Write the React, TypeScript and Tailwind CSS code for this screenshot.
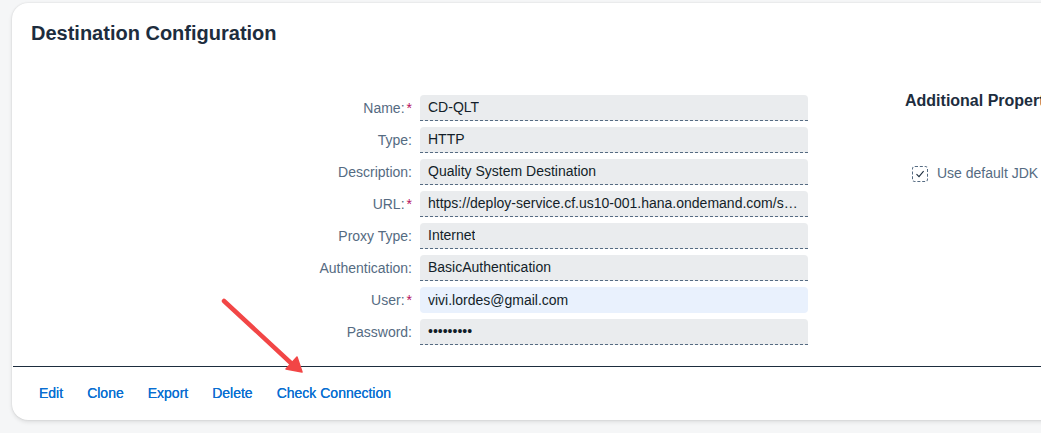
import React from "react";

const rows: { label: string; value: string; required?: boolean; focus?: boolean }[] = [
  { label: "Name:", value: "CD-QLT", required: true },
  { label: "Type:", value: "HTTP" },
  { label: "Description:", value: "Quality System Destination" },
  { label: "URL:", value: "https://deploy-service.cf.us10-001.hana.ondemand.com/slprot/hana-cloud-qa-whatever", required: true },
  { label: "Proxy Type:", value: "Internet" },
  { label: "Authentication:", value: "BasicAuthentication" },
  { label: "User:", value: "vivi.lordes@gmail.com", required: true, focus: true },
  { label: "Password:", value: "•••••••••" },
];

export default function App() {
  return (
    <div
      className="relative w-[1041px] h-[433px] overflow-hidden bg-[#f5f6f7] pl-[12px] pt-[3px]"
      style={{ fontFamily: '"Liberation Sans", Arial, sans-serif' }}
    >
      <div className="w-[1100px] h-[417px] bg-white rounded-[16px] shadow-[0_0_2px_rgba(0,0,0,0.12),0_2px_4px_rgba(0,0,0,0.1)] flex flex-col">
        <div className="pl-[19px] pt-[18px]">
          <div className="h-[24px] text-[20px] leading-[24px] font-bold text-[#1d2d3e]">Destination Configuration</div>
        </div>
        <div className="flex mt-[50px] h-[250px]">
          <div className="w-[408px] flex flex-col gap-[6px]">
            {rows.map((r) => (
              <div key={r.label} className="h-[26px] flex items-center">
                <div className="w-[400px] text-right text-[14px] text-[#556b82]">
                  {r.label}
                  {r.required ? <span className="text-[#b5105e] ml-[2px]">*</span> : null}
                </div>
              </div>
            ))}
          </div>
          <div className="w-[388px] flex flex-col gap-[6px]">
            {rows.map((r) => (
              <div
                key={r.label}
                className={
                  r.focus
                    ? "h-[26px] rounded-[4px] bg-[#e9f1fd] flex items-center px-[8px] text-[14px] text-[#131e29]"
                    : "h-[26px] rounded-t-[4px] bg-[#eaecee] border-b border-dashed border-[#556b82] flex items-center px-[8px] text-[14px] text-[#131e29]"
                }
              >
                <span className="truncate">{r.value}</span>
              </div>
            ))}
          </div>
          <div className="ml-[97px] flex flex-col">
            <div className="h-[14px] mt-[-1px] text-[16px] leading-[14px] font-bold text-[#1d2d3e] whitespace-nowrap">
              Additional Properties
            </div>
            <div className="mt-[55px] ml-[7px] flex items-center gap-[9px] whitespace-nowrap">
              <div className="w-[16px] h-[16px] rounded-[3px] border border-dashed border-[#556b82] flex items-center justify-center">
                <svg width="10" height="10" viewBox="0 0 10 10">
                  <path d="M1.5 5.2 L4 7.6 L8.6 2.2" fill="none" stroke="#1d2d3e" strokeWidth="1.1" />
                </svg>
              </div>
              <span className="text-[14px] text-[#556b82]">Use default JDK truststore</span>
            </div>
          </div>
        </div>
        <div className="mt-[21px] ml-[1px] border-t border-[#1d2d3e]" />
        <div className="h-[53px] flex items-center pl-[27px] gap-[24px] text-[14px] text-[#0a6ed1] font-normal [text-shadow:0_0_0.4px_#0a6ed1]">
          <span>Edit</span>
          <span>Clone</span>
          <span>Export</span>
          <span>Delete</span>
          <span>Check Connection</span>
        </div>
      </div>
      <svg className="absolute left-0 top-0 pointer-events-none" width="1041" height="433">
        <line x1="224" y1="301" x2="292" y2="364" stroke="#f24646" strokeWidth="4.5" strokeLinecap="round" />
        <polygon points="302,372 297,357 286,369" fill="#f24646" stroke="#f24646" strokeWidth="1.5" strokeLinejoin="round" />
      </svg>
    </div>
  );
}
